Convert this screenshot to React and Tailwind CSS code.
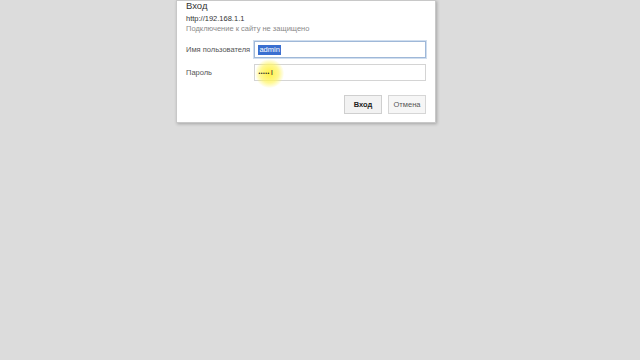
export default function App() {
  return (
    <div
      className="relative h-[360px] w-[640px] overflow-hidden bg-[#dcdcdc]"
      style={{ fontFamily: '"Liberation Sans", Arial, sans-serif' }}
    >
      <div className="ml-[176px] w-[260px] h-[123px] bg-white border border-[#c8c8c8] shadow-[1px_1px_3px_rgba(0,0,0,0.25)] pl-[9px] pr-[9px] pt-0">
        <div className="mt-0 text-[9.5px] leading-[10px] text-[#333]">Вход</div>
        <div className="mt-[3px] text-[7.5px] leading-[9px] text-[#333]">http://192.168.1.1</div>
        <div className="mt-[1px] text-[7.5px] leading-[9px] text-[#8a8a8a]">Подключение к сайту не защищено</div>

        <div className="mt-[8px] flex items-center">
          <div className="w-[69px] text-[7.5px] text-[#555]">Имя пользователя</div>
          <div className="flex h-[17px] w-[173px] items-center border border-[#9fb8d8] px-[3px] shadow-[0_0_0_1px_rgba(120,160,210,0.35)]">
            <span className="bg-[#3a6fd0] px-[1px] text-[7.5px] leading-[10px] text-white">admin</span>
          </div>
        </div>

        <div className="mt-[6px] flex items-center">
          <div className="w-[69px] text-[7.5px] text-[#555]">Пароль</div>
          <div className="relative flex h-[17px] w-[173px] items-center border border-[#d4d4d4] px-[3px]">
            <div className="absolute left-[0px] top-[-6px] h-[29px] w-[29px] rounded-full bg-[radial-gradient(circle,rgba(255,240,60,0.95)_0%,rgba(255,245,100,0.7)_45%,rgba(255,250,150,0)_72%)]" />
            <span className="relative text-[5px] leading-[10px] tracking-[0.5px] text-[#222]">•••••</span>
            <span className="relative ml-[1px] text-[8px] leading-[10px] text-[#333]">I</span>
          </div>
        </div>

        <div className="mt-[14px] flex justify-end gap-[6px]">
          <button className="h-[19px] w-[38px] border border-[#cfcfcf] bg-[#f2f2f2] text-[7.5px] font-bold text-[#222]">
            Вход
          </button>
          <button className="h-[19px] w-[38px] border border-[#d6d6d6] bg-[#f6f6f6] text-[7.5px] text-[#555]">
            Отмена
          </button>
        </div>
      </div>
    </div>
  )
}
